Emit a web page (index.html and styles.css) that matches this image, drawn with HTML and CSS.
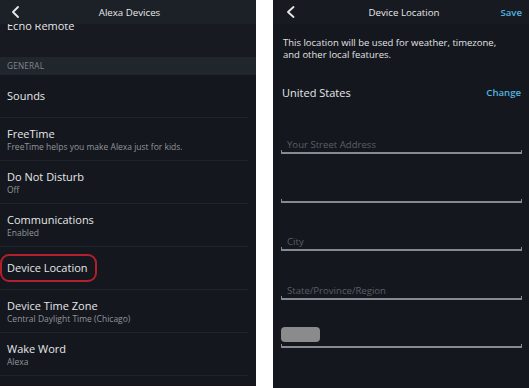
FILE: index.html
```html
<!DOCTYPE html>
<html>
<head>
<meta charset="utf-8">
<link rel="stylesheet" href="styles.css">
</head>
<body>
<div class="screens">
  <section class="phone phone-left">
    <header class="bar bar-left">
      <span class="bar-side"><svg class="chev" width="10" height="12" viewBox="0 0 10 12"><polyline points="7,1 2,6 7,11" fill="none" stroke="#e8e8e8" stroke-width="1.8" stroke-linecap="round" stroke-linejoin="round"/></svg></span>
      <span class="bar-title">Alexa Devices</span>
      <span class="bar-side"></span>
    </header>
    <div class="list">
      <div class="row row-cut"><div class="title">Echo Remote</div></div>
      <div class="section">GENERAL</div>
      <div class="row"><div class="title">Sounds</div></div>
      <div class="row"><div class="title">FreeTime</div><div class="sub">FreeTime helps you make Alexa just for kids.</div></div>
      <div class="row"><div class="title">Do Not Disturb</div><div class="sub">Off</div></div>
      <div class="row"><div class="title">Communications</div><div class="sub">Enabled</div></div>
      <div class="row"><div class="title"><span class="marked">Device Location</span></div></div>
      <div class="row"><div class="title">Device Time Zone</div><div class="sub">Central Daylight Time (Chicago)</div></div>
      <div class="row"><div class="title">Wake Word</div><div class="sub">Alexa</div></div>
    </div>
  </section>
  <section class="phone phone-right">
    <header class="bar bar-right">
      <span class="bar-side"><svg class="chev" width="10" height="12" viewBox="0 0 10 12"><polyline points="7.5,1 2,6 7.5,11" fill="none" stroke="#e8e8e8" stroke-width="1.8" stroke-linecap="round" stroke-linejoin="round"/></svg></span>
      <span class="bar-title">Device Location</span>
      <span class="bar-side bar-action">Save</span>
    </header>
    <div class="desc"><div class="desc-line">This location will be used for weather, timezone,</div><div class="desc-line">and other local features.</div></div>
    <div class="country"><span>United States</span><span class="link">Change</span></div>
    <div class="form">
      <div class="field"><span class="ph">Your Street Address</span><span class="line"></span></div>
      <div class="field"><span class="line"></span></div>
      <div class="field"><span class="ph">City</span><span class="line"></span></div>
      <div class="field"><span class="ph">State/Province/Region</span><span class="line"></span></div>
      <div class="field"><span class="pill"></span><span class="line"></span></div>
    </div>
  </section>
</div>
</body>
</html>
```
FILE: styles.css
```css
* { box-sizing: border-box; }
html, body { margin: 0; padding: 0; background: #ffffff; }
body { width: 529px; height: 388px; overflow: hidden; font-family: "Open Sans", "Noto Sans", sans-serif; }

.screens { display: flex; gap: 17px; align-items: flex-start; }

.phone { width: 256px; background: #14171d; color: #e4e5e7; overflow: hidden; display: flex; flex-direction: column; }
.phone-left { height: 386px; }
.phone-right { height: 388px; }

.bar { display: grid; grid-template-columns: 1fr auto 1fr; align-items: center; background: #1c2027; font-size: 9.7px; color: #e8e8ea; flex: none; }
.bar-left { height: 24px; padding: 0 8px 0 11px; }
.bar-right { height: 24px; padding: 0 7px 0 13px; background: #171a20; }
.bar-side { display: flex; align-items: center; }
.chev { display: block; }
.bar-title { text-align: center; }
.bar-action { justify-content: flex-end; color: #54b4e0; font-weight: 600; font-size: 9.6px; }

.list { flex: 1; overflow: hidden; display: flex; flex-direction: column; }
.row { height: 43px; flex: none; display: flex; flex-direction: column; justify-content: center; padding: 0 8px 0 7px; border-bottom: 1px solid #1f232a; margin: 0 8px 0 0; }
.row-cut { height: 38px; margin-top: -5px; justify-content: flex-start; border-bottom: none; background: #171a20; margin-right: 0; }
.title { font-size: 11px; line-height: 14px; color: #e6e7e9; white-space: nowrap; }
.sub { font-size: 8.5px; line-height: 11px; color: #91959c; white-space: nowrap; }
.section { height: 18px; flex: none; line-height: 18px; padding-left: 7px; background: #21252c; color: #80858d; font-size: 8.2px; letter-spacing: 0.2px; }
.marked { display: inline-block; margin-left: -7px; padding: 5px 7px 5px 5px; border: 2px solid #b3202b; border-radius: 9px; }

.desc { height: 56px; padding: 13px 6px 0 10px; font-size: 9.5px; line-height: 11.5px; color: #e2e3e5; flex: none; white-space: nowrap; }
.desc-line { height: 11.5px; }
.country { height: 25.5px; flex: none; display: flex; justify-content: space-between; align-items: center; padding: 0 8px 0 9px; font-size: 11px; color: #e6e7e9; }
.link { color: #54b4e0; font-size: 9.6px; font-weight: 600; }

.form { display: flex; flex-direction: column; padding: 0 7px 0 8px; }
.field { height: 48.5px; flex: none; display: flex; flex-direction: column; justify-content: flex-end; }
.ph { font-size: 9.6px; line-height: 12px; color: #5b5f67; padding-left: 6px; margin-bottom: -1px; }
.line { display: block; height: 4px; border: 1px solid #868a91; border-top: none; border-bottom-width: 2px; }
.pill { display: block; width: 39px; height: 15px; background: #8a8b8d; border-radius: 4px; margin-bottom: 2px; }
```
